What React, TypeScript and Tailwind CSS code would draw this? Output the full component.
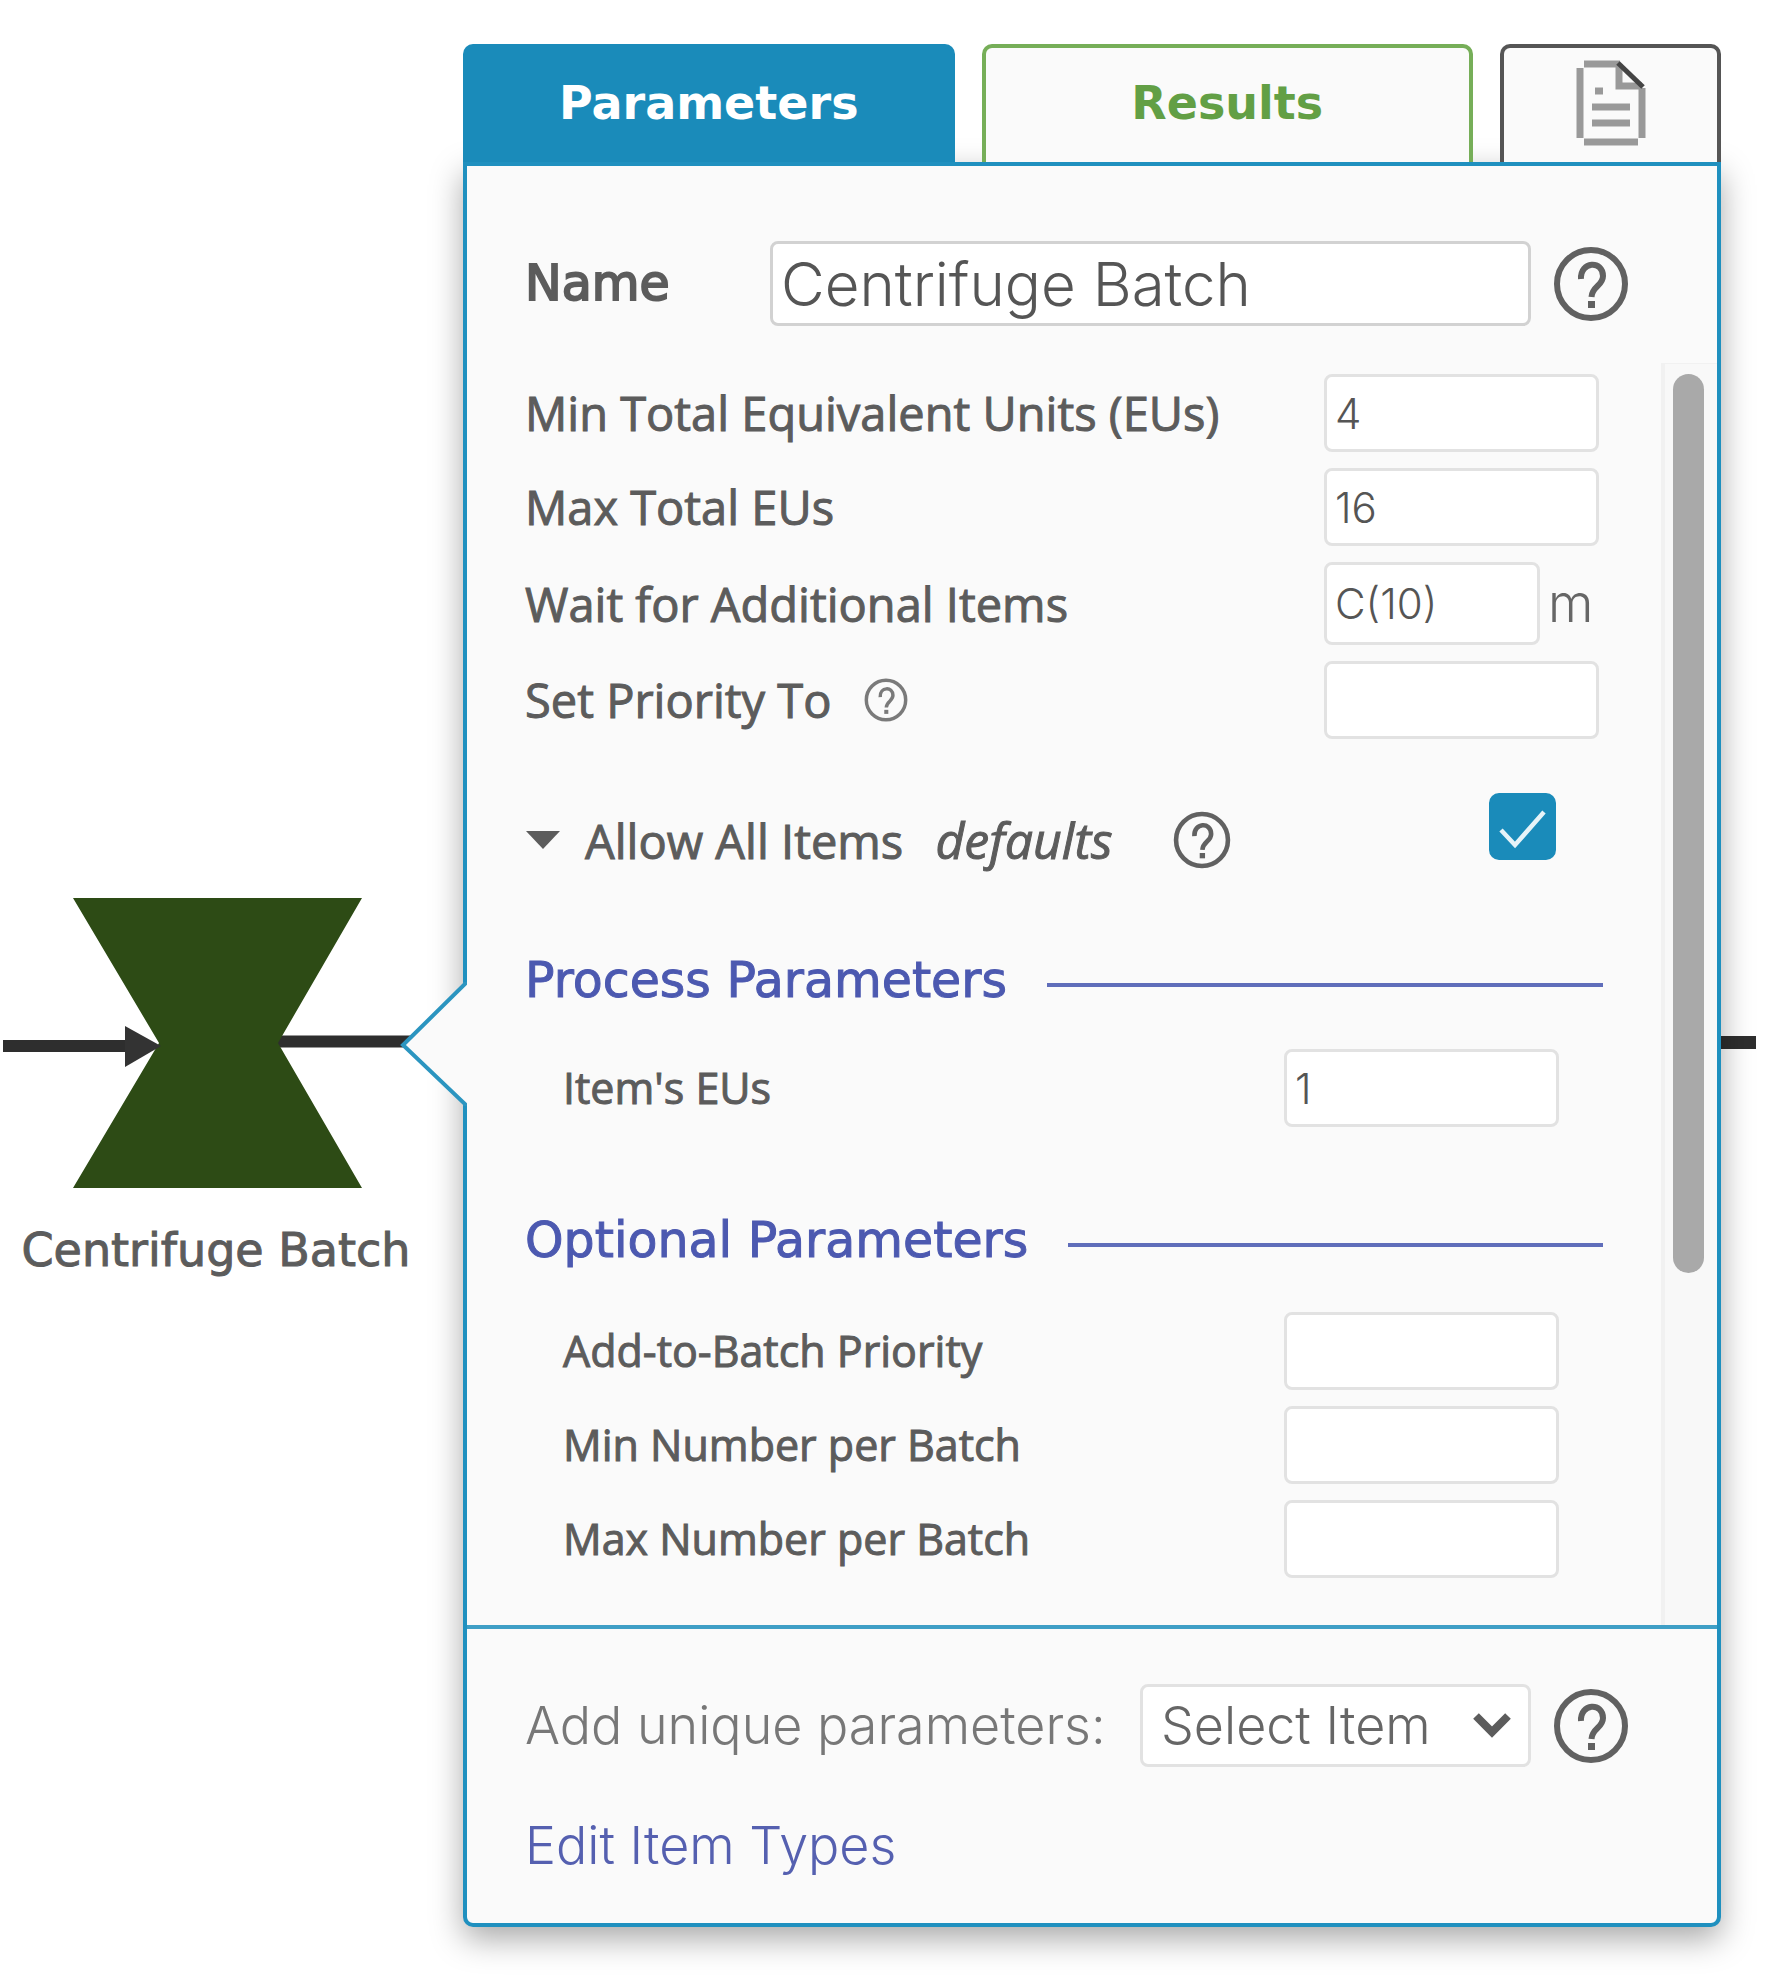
import { useState } from 'react';

const labelText = "font-['Open_Sans',sans-serif] text-[47px] leading-[56px] text-[#5c5c5c] [-webkit-text-stroke:1px_#5c5c5c]";
const subLabelText = "font-['Open_Sans',sans-serif] text-[43px] leading-[56px] text-[#5c5c5c] [-webkit-text-stroke:1px_#5c5c5c]";
const smallInput = "min-w-0 rounded-lg border-3 border-[#e2e2e2] bg-white pl-2 font-['Inter',sans-serif] text-[42px] font-light text-[#555] outline-none";

export default function App() {
  const [tab, setTab] = useState('parameters');

  return (
    <div className="flex items-start bg-white pt-11 pb-[51px]">
      <ProcessNode name="Centrifuge Batch" />

      <main className="relative min-w-0 flex-1">
        <div role="tablist" className="relative z-10 flex h-[118px] gap-[27px]">
          <button
            role="tab"
            aria-selected={tab === 'parameters'}
            onClick={() => setTab('parameters')}
            className="w-0 grow rounded-t-[10px] border-4 border-b-0 border-[#1a8bba] bg-[#1a8bba] pb-1 font-['DejaVu_Sans',sans-serif] text-[46px] font-bold text-white"
          >
            Parameters
          </button>
          <button
            role="tab"
            aria-selected={tab === 'results'}
            onClick={() => setTab('results')}
            className="w-0 grow rounded-t-[10px] border-4 border-b-0 border-[#76ae58] bg-[#fafafa] pb-1 font-['DejaVu_Sans',sans-serif] text-[46px] font-bold text-[#629f45]"
          >
            Results
          </button>
          <button
            role="tab"
            aria-label="Notes"
            aria-selected={tab === 'notes'}
            onClick={() => setTab('notes')}
            className="flex w-[221px] shrink-0 items-center justify-center rounded-t-[10px] border-4 border-b-0 border-[#555] bg-[#fafafa] pb-1"
          >
            <NotesIcon />
          </button>
        </div>

        <div className="relative rounded-b-[10px] border-4 border-[#1f90bf] bg-[#fafafa] shadow-[0_12px_32px_rgba(0,0,0,0.34)]">
          <PanelPointer />

          <div className="flex items-center pt-[75px] pr-[88px] pb-[37px] pl-[58px]">
            <label
              htmlFor="name"
              className="w-[245px] shrink-0 font-['DejaVu_Sans',sans-serif] text-[49px] leading-[56px] text-[#5c5c5c] [-webkit-text-stroke:2px_#5c5c5c]"
            >
              Name
            </label>
            <input
              id="name"
              defaultValue="Centrifuge Batch"
              className="h-[85px] min-w-0 flex-1 rounded-lg border-3 border-[#d2d2d2] bg-white pl-2 font-['Inter',sans-serif] text-[60px] font-light text-[#555] outline-none"
            />
            <HelpButton label="About the name" className="ml-[22px] size-[76px]" />
          </div>

          <div className="flex">
            <div className="min-w-0 flex-1 pt-[11px] pr-[58px] pb-[47px] pl-[58px]">
              <div className="flex flex-col gap-4 pr-1">
                <Row id="min-eus" label="Min Total Equivalent Units (EUs)" value="4" />
                <Row id="max-eus" label="Max Total EUs" value="16" />
                <div className="flex items-center justify-between">
                  <label htmlFor="wait" className={labelText}>Wait for Additional Items</label>
                  <div className="flex w-[275px] items-center gap-2">
                    <input id="wait" defaultValue="C(10)" className={`${smallInput} h-[83px] w-[216px]`} />
                    <span className="font-['Inter',sans-serif] text-[52px] leading-[56px] font-light text-[#666]">m</span>
                  </div>
                </div>
                <div className="flex items-center">
                  <label htmlFor="priority" className={labelText}>Set Priority To</label>
                  <HelpButton label="About priority" className="ml-8 size-11" thin />
                  <input id="priority" className={`${smallInput} ml-auto h-[78px] w-[275px]`} />
                </div>
              </div>

              <div className="mt-[54px] flex h-20 items-start justify-between pr-[47px]">
                <div className="flex h-full items-center pt-[14px]">
                  <button aria-label="Collapse" className="mr-6">
                    <svg width="36" height="20" viewBox="0 0 36 20">
                      <path d="M1 1H35L18 19Z" fill="#5c5c5c" />
                    </svg>
                  </button>
                  <label htmlFor="allow-all" className={labelText}>
                    Allow All Items <em className="ml-5 text-[50px]">defaults</em>
                  </label>
                  <HelpButton label="About allowed items" className="ml-[60px] size-[58px]" />
                </div>
                <div className="relative size-[67px]">
                  <input
                    id="allow-all"
                    type="checkbox"
                    defaultChecked
                    className="peer block size-full appearance-none rounded-[10px] border-3 border-[#1a8bba] bg-white checked:bg-[#1a8bba]"
                  />
                  <svg viewBox="0 0 67 67" className="pointer-events-none absolute inset-0 hidden peer-checked:block">
                    <path d="M12 37L26 52L55 19" fill="none" stroke="#e6f3f8" strokeWidth="4.5" />
                  </svg>
                </div>
              </div>

              <SectionTitle title="Process Parameters" className="mt-20" />
              <div className="mt-10 flex flex-col gap-4 pr-11 pl-[38px]">
                <Row id="item-eus" label="Item's EUs" value="1" nested />
              </div>

              <SectionTitle title="Optional Parameters" className="mt-[86px]" />
              <div className="mt-[43px] flex flex-col gap-4 pr-11 pl-[38px]">
                <Row id="add-priority" label="Add-to-Batch Priority" nested />
                <Row id="min-batch" label="Min Number per Batch" nested />
                <Row id="max-batch" label="Max Number per Batch" nested />
              </div>
            </div>

            {/* scroll track */}
            <div className="flex w-14 flex-col border-t border-l-4 border-[#f1f1f1] bg-[#f8f8f8] pt-[10px] pr-[13px] pl-2">
              <div className="flex-[898] rounded-full bg-[#a9a9a9]" />
              <div className="flex-[352]" />
            </div>
          </div>

          <div className="border-t-4 border-[#3f9fc6] pt-[55px] pr-[88px] pb-[47px] pl-[58px]">
            <div className="flex items-center">
              <label htmlFor="unique" className="font-['Inter',sans-serif] text-[52px] leading-[60px] font-light text-[#777]">
                Add unique parameters:
              </label>
              <div className="relative ml-auto w-[391px]">
                <select
                  id="unique"
                  className="block h-[83px] w-full appearance-none rounded-lg border-3 border-[#e2e2e2] bg-white pl-[18px] font-['Inter',sans-serif] text-[52px] font-light text-[#666] outline-none"
                >
                  <option>Select Item</option>
                </select>
                <svg viewBox="0 0 38 26" className="pointer-events-none absolute top-7 right-5 h-[26px] w-[38px]">
                  <path d="M3 4L19 20L35 4" fill="none" stroke="#5c5c5c" strokeWidth="8" />
                </svg>
              </div>
              <HelpButton label="About unique parameters" className="ml-[22px] size-[76px]" />
            </div>
            <a href="#item-types" className="mt-[49px] block w-fit font-['Inter',sans-serif] text-[52px] leading-[60px] font-light text-[#5560b0]">
              Edit Item Types
            </a>
          </div>
        </div>
      </main>

      {/* outgoing connector */}
      <div className="w-[71px] shrink-0 pt-[992px]">
        <div className="h-[13px] w-[35px] bg-[#2e2e2e]" />
      </div>
    </div>
  );
}

function Row({ id, label, value, nested }: { id: string, label: string, value?: string, nested?: boolean }) {
  return (
    <div className="flex items-center justify-between">
      <label htmlFor={id} className={nested ? subLabelText : labelText}>{label}</label>
      <input id={id} defaultValue={value} className={`${smallInput} h-[78px] w-[275px]`} />
    </div>
  );
}

function SectionTitle({ title, className }: { title: string, className: string }) {
  return (
    <div className={`flex items-center gap-10 ${className}`}>
      <h2 className="font-['DejaVu_Sans',sans-serif] text-[49px] leading-[56px] text-[#4c59b0] [-webkit-text-stroke:1px_#4c59b0]">{title}</h2>
      <div className="mt-2 h-1 flex-1 bg-[#5f6dba]" />
    </div>
  );
}

function HelpButton({ label, className, thin }: { label: string, className: string, thin?: boolean }) {
  const stroke = thin ? '#7a7a7a' : '#616161';
  return (
    <button aria-label={label} className={`shrink-0 ${className}`}>
      <svg viewBox="0 0 76 76" fill="none" stroke={stroke} className="size-full">
        <circle cx="38" cy="38" r="34" strokeWidth="6" />
        <path d="M28 33C27 15 50 14 50 30C50 40 39 40 38.500 51" strokeWidth="6" />
        <path d="M38.500 55V62" strokeWidth="7" />
      </svg>
    </button>
  );
}

function NotesIcon() {
  return (
    <svg width="70" height="86" viewBox="0 0 70 86" fill="none" stroke="#999" strokeWidth="7">
      <path d="M8 4H44M4 8V78M8 82H62M66 78V28" />
      <path d="M43 4V26H66" />
      <path d="M42 3L67 27" stroke="#444" strokeWidth="5" />
      <path d="M19 31H27M16 47H54M16 63H54" />
    </svg>
  );
}

// small arrow on the panel's left edge, pointing at the selected node
function PanelPointer() {
  return (
    <svg width="68" height="124" viewBox="0 0 68 124" className="absolute top-[816px] -left-[67px]">
      <path d="M68 1L2 63L68 124Z" fill="#fafafa" />
      <path d="M65 0V2L3 63L65 122V124" fill="none" stroke="#2b95c0" strokeWidth="4" />
    </svg>
  );
}

function ProcessNode({ name }: { name: string }) {
  return (
    <figure className="w-[463px] shrink-0 pt-[852px]">
      <svg width="463" height="294" viewBox="0 0 463 294">
        <path d="M3 150H128" stroke="#2e2e2e" strokeWidth="12" />
        <path d="M276 145.500H420" stroke="#2e2e2e" strokeWidth="12" />
        <path d="M73 2H362L278 147L362 292H73L159 147Z" fill="#2d4b15" />
        <path d="M125 130L161 150L125 171Z" fill="#333" />
      </svg>
      <figcaption className="mt-8 w-[432px] text-center font-['DejaVu_Sans',sans-serif] text-[46px] leading-[56px] whitespace-nowrap text-[#5c5c5c] [-webkit-text-stroke:1px_#5c5c5c]">
        {name}
      </figcaption>
    </figure>
  );
}
